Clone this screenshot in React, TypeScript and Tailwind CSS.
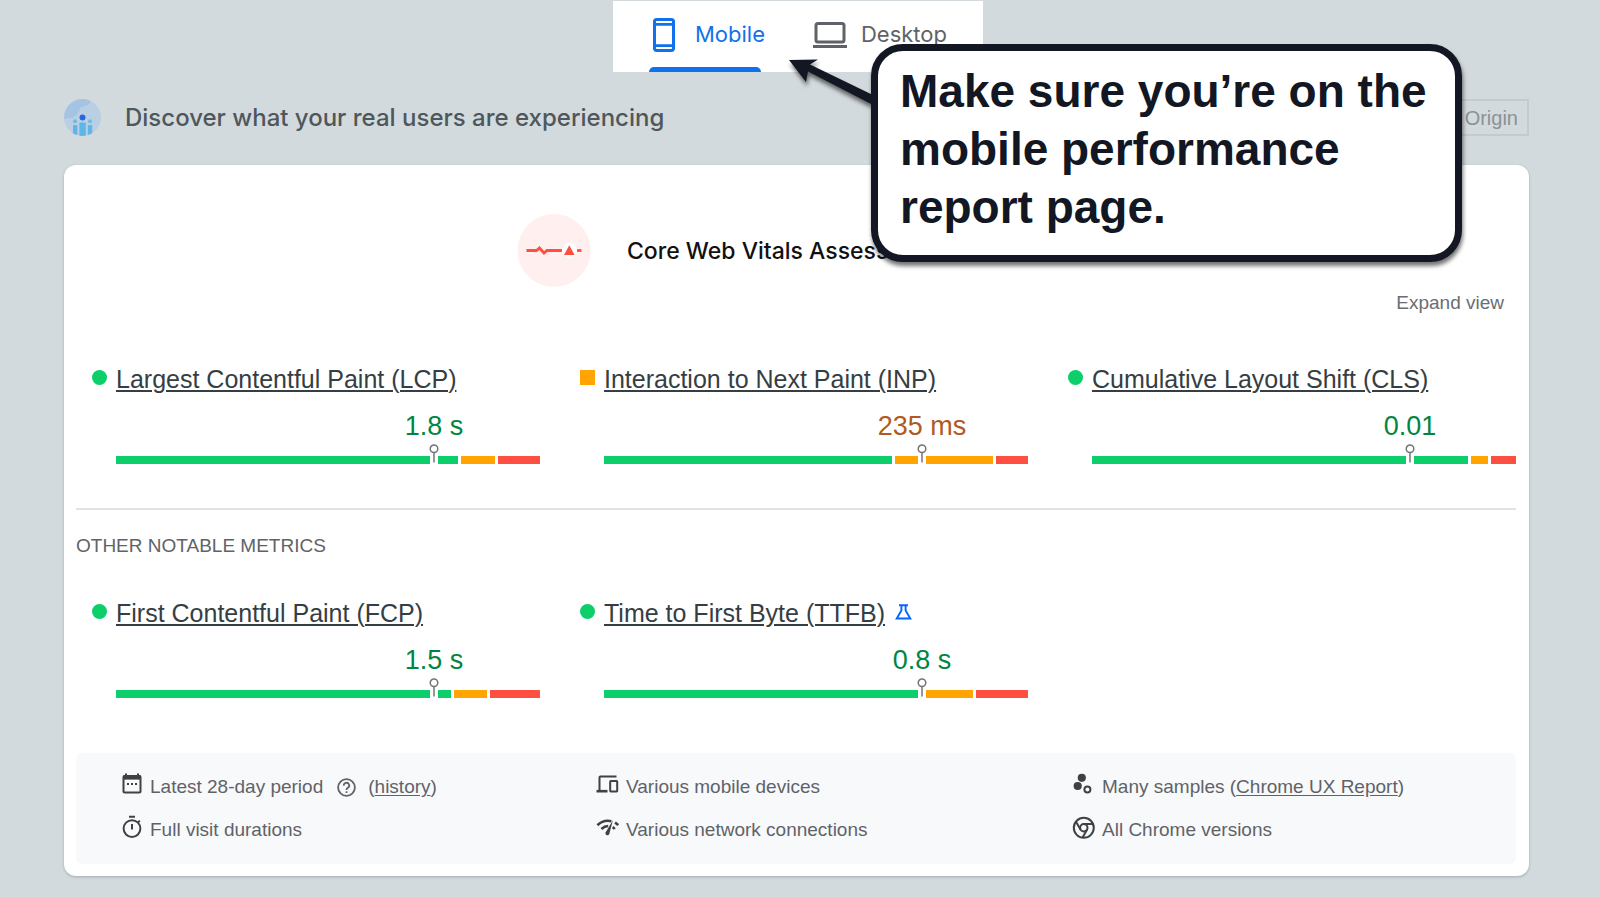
import { ReactNode } from 'react';
import clsx from 'clsx';

type Tone = 'good' | 'average' | 'poor';

interface Metric {
    name: string;
    value: string;
    status: Tone;
    // The marker sits between `before` and `after`
    before: [Tone, number][];
    after: [Tone, number][];
    experimental?: boolean;
}

const coreMetrics: Metric[] = [
    {
        name: 'Largest Contentful Paint (LCP)',
        value: '1.8 s',
        status: 'good',
        before: [['good', 314]],
        after: [['good', 20], ['average', 34], ['poor', 42]],
    },
    {
        name: 'Interaction to Next Paint (INP)',
        value: '235 ms',
        status: 'average',
        before: [['good', 288], ['average', 23]],
        after: [['average', 67], ['poor', 32]],
    },
    {
        name: 'Cumulative Layout Shift (CLS)',
        value: '0.01',
        status: 'good',
        before: [['good', 314]],
        after: [['good', 54], ['average', 17], ['poor', 25]],
    },
];

const otherMetrics: Metric[] = [
    {
        name: 'First Contentful Paint (FCP)',
        value: '1.5 s',
        status: 'good',
        before: [['good', 314]],
        after: [['good', 13], ['average', 33], ['poor', 50]],
    },
    {
        name: 'Time to First Byte (TTFB)',
        value: '0.8 s',
        status: 'good',
        before: [['good', 314]],
        after: [['average', 47], ['poor', 52]],
        experimental: true,
    },
];

const toneBg: Record<Tone, string> = {
    good: 'bg-[#0cce6b]',
    average: 'bg-[#ffa400]',
    poor: 'bg-[#ff4e42]',
};

const toneText: Record<Tone, string> = {
    good: 'text-[#018642]',
    average: 'text-[#b05a22]',
    poor: 'text-[#eb0f00]',
};

function Segments({ items }: { items: [Tone, number][] }) {
    return (
        <>
            {items.map(([tone, size], index) => (
                <div key={index} className={clsx('h-2 basis-0', toneBg[tone])} style={{ flexGrow: size }} />
            ))}
        </>
    );
}

function MetricCard({ metric }: { metric: Metric }) {
    return (
        <div className="flex gap-[9px]">
            <span
                className={clsx(
                    'mt-[7px] size-[15px] shrink-0',
                    toneBg[metric.status],
                    metric.status === 'good' && 'rounded-full',
                )}
            />
            <div className="min-w-0 flex-1">
                <div className="flex items-center gap-2.5">
                    <a href="#" className="text-[25px] leading-8 whitespace-nowrap text-[#353e43] underline decoration-2 underline-offset-2">
                        {metric.name}
                    </a>
                    {metric.experimental && <FlaskIcon />}
                </div>
                <div className={clsx('mt-[13px] ml-[75%] w-fit -translate-x-1/2 text-[27px] leading-9 whitespace-nowrap', toneText[metric.status])}>
                    {metric.value}
                </div>
                <div className="mt-3 flex">
                    <div className="flex w-[74%] gap-[3px]">
                        <Segments items={metric.before} />
                    </div>
                    <div className="relative w-2">
                        <svg className="absolute -top-3 -left-px" width="10" height="19" viewBox="0 0 10 19" fill="none" stroke="#757575" strokeWidth="1.5">
                            <circle cx="5" cy="4.8" r="3.8" fill="#fff" />
                            <path d="M5 8.6V18.5" />
                        </svg>
                    </div>
                    <div className="flex flex-1 gap-[3px]">
                        <Segments items={metric.after} />
                    </div>
                </div>
            </div>
        </div>
    );
}

function FlaskIcon() {
    return (
        <svg className="-mt-0.5" width="17" height="16" viewBox="0 0 17 16" fill="none" stroke="#0565ff" strokeWidth="1.9">
            <path d="M4 1.2H13M6.4 1.2V6.4L1.7 14.5H15.3L10.6 6.4V1.2" />
        </svg>
    );
}

function PhoneIcon() {
    return (
        <svg className="shrink-0" width="22" height="34" viewBox="0 0 22 34" fill="none" stroke="#1171ec" strokeWidth="3">
            <rect x="1.5" y="1.5" width="19" height="31" rx="2.2" />
            <path d="M2 6.4H20M2 27.6H20" strokeWidth="2.6" />
        </svg>
    );
}

function LaptopIcon() {
    return (
        <svg className="shrink-0" width="34" height="26" viewBox="0 0 34 26" fill="none" stroke="#5f6368">
            <rect x="3" y="1.5" width="28" height="18.6" rx="2" strokeWidth="3" />
            <path d="M0 24.4H34" strokeWidth="3" />
        </svg>
    );
}

function UsersIcon() {
    return (
        <svg width="37" height="37" viewBox="0 0 37 37">
            <defs>
                <clipPath id="globe">
                    <circle cx="18.5" cy="18.5" r="18.5" />
                </clipPath>
            </defs>
            <g clipPath="url(#globe)">
                <rect width="37" height="37" fill="#b9cfe4" />
                <path d="M0 0H26V4C24 7 20 6 19 8C17 9 16 7 16 10C16 13 13 13 13 16C9 17 9 20 5 19L0 20Z" fill="#a5c3e3" />
                <rect x="9" y="26" width="4.4" height="11" rx="1" fill="#5fb6e6" />
                <rect x="15.4" y="23.5" width="6.4" height="14" rx="1" fill="#5fb6e6" />
                <rect x="23.8" y="26" width="4.4" height="11" rx="1" fill="#5fb6e6" />
                <circle cx="11" cy="22.3" r="2" fill="#6dbbe6" />
                <circle cx="26" cy="22.3" r="2" fill="#6dbbe6" />
                <circle cx="18.5" cy="18.6" r="3" fill="#2a68e2" />
            </g>
        </svg>
    );
}

function VitalsIcon() {
    return (
        <svg width="74" height="74" viewBox="0 0 74 74">
            <circle cx="37" cy="36.5" r="36.5" fill="#fff0ef" />
            <path d="M9.5 36.5H19.5L22.5 34L27 39L30 36.5H45" fill="none" stroke="#ff4e42" strokeWidth="2.8" />
            <path d="M60 36.5H64.5" stroke="#ff4e42" strokeWidth="2.8" />
            <circle cx="52.3" cy="36.5" r="7.4" fill="#fff" />
            <path d="M52.3 31.3L57.6 41H47Z" fill="#ff4e42" />
        </svg>
    );
}

function CalendarIcon() {
    return (
        <svg width="24" height="24" viewBox="0 0 24 24" fill="none" stroke="#3f4144">
            <path d="M6 1.5V5M18 1.5V5" strokeWidth="2" />
            <rect x="3.5" y="4" width="17" height="16.6" rx="1" strokeWidth="2" />
            <path d="M3 5.6H21" strokeWidth="4" />
            <path d="M7 12H9M11 12H13M15 12H17" strokeWidth="1.8" />
        </svg>
    );
}

function TimerIcon() {
    return (
        <svg width="24" height="24" viewBox="0 0 24 24" fill="none" stroke="#3f4144" strokeWidth="2">
            <circle cx="12" cy="13.6" r="8.4" />
            <path d="M9 1.8H15M12 9V14.4M17.8 7.6L19.8 5.6" />
        </svg>
    );
}

function DevicesIcon() {
    return (
        <svg width="24" height="24" viewBox="0 0 24 24" fill="none" stroke="#3f4144" strokeWidth="2">
            <path d="M3.5 18.5V5.5Q3.5 4.6 4.4 4.6H20.5" />
            <path d="M0.5 19.2H11.5" strokeWidth="2.6" />
            <rect x="14.2" y="9" width="7" height="10.4" rx="0.6" />
        </svg>
    );
}

function NetworkIcon() {
    return (
        <svg width="24" height="24" viewBox="0 0 24 24" fill="none" stroke="#3f4144" strokeWidth="2.6">
            <path d="M1.4 10.2Q7.5 4.3 15.4 6.2M19 7.6Q20.8 8.7 22.2 10.2" />
            <path d="M5.4 14Q8.6 11 12.2 11M16.6 12.2Q17.8 12.9 18.8 14" />
            <path d="M16.9 5.2L13.4 18.4A2 2 0 1 1 10 16.8Z" fill="#3f4144" stroke="none" />
        </svg>
    );
}

function SamplesIcon() {
    return (
        <svg width="24" height="24" viewBox="0 0 24 24">
            <circle cx="9.8" cy="5.8" r="4.1" fill="#3f4144" />
            <circle cx="5.7" cy="14" r="4.1" fill="#3f4144" />
            <circle cx="15.4" cy="17.6" r="3" fill="none" stroke="#3f4144" strokeWidth="2" />
        </svg>
    );
}

function ChromeIcon() {
    return (
        <svg width="24" height="24" viewBox="0 0 24 24" fill="none" stroke="#3f4144" strokeWidth="2">
            <circle cx="11.8" cy="12.8" r="10" />
            <circle cx="11.8" cy="12.8" r="3.7" />
            <path d="M11.8 9.1H20.8M8.6 14.7L4 6.8M15 14.7L10.6 22.6" />
        </svg>
    );
}

function HelpIcon() {
    return (
        <svg className="mr-3 ml-3.5" width="19" height="19" viewBox="0 0 19 19" fill="none" stroke="#5f6368" strokeWidth="1.8">
            <circle cx="9.5" cy="9.5" r="8.4" />
            <path d="M6.8 7.6A2.7 2.7 0 1 1 10.9 9.8Q9.5 10.6 9.5 12" />
            <path d="M9.5 13.3V15" />
        </svg>
    );
}

function Fact({ icon, children }: { icon: ReactNode; children: ReactNode }) {
    return (
        <li className="flex h-7 items-center gap-1.5 whitespace-nowrap">
            <span className="-mt-1.5 shrink-0">{icon}</span>
            <span className="flex items-center">{children}</span>
        </li>
    );
}

function Callout() {
    return (
        <div className="absolute top-11 left-[871px] drop-shadow-[1px_4px_2px_rgba(0,0,0,0.55)]">
            <svg className="absolute top-3.5 -left-[84px]" width="90" height="50" viewBox="0 0 90 50" fill="#121723">
                <path d="M2 2L31 1.5L23 6.5L88 38V48L21 13.5L19 24Z" />
            </svg>
            <p className="relative w-[591px] rounded-[32px] border-[7px] border-[#121723] bg-white pt-[11px] pr-4 pb-[19px] pl-[22px] text-[46px] leading-[58px] font-bold text-[#121723]">
                Make sure you’re on the mobile performance report page.
            </p>
        </div>
    );
}

export default function App() {
    return (
        <div className="relative min-h-screen overflow-hidden bg-[#d3dadd] pt-px font-['Liberation_Sans',Arial,sans-serif]">
            {/* Device tabs */}
            <div className="flex justify-center pr-1">
                <nav className="flex h-[71px] gap-[52px] bg-white px-9 font-['Inter',sans-serif] text-[22px]">
                    <button className="relative flex w-28 items-center gap-5 pb-1 pl-1 text-[#1171ec]">
                        <PhoneIcon />
                        Mobile
                        <span className="absolute inset-x-0 bottom-0 h-[5px] rounded-t-md bg-[#1171ec]" />
                    </button>
                    <button className="flex items-center gap-3.5 pb-1 text-[#5f6368]">
                        <LaptopIcon />
                        Desktop
                    </button>
                </nav>
            </div>

            <div className="pr-[71px] pl-16">
                <header className="mt-[27px] mb-[29px] flex items-center justify-between">
                    <div className="flex items-center gap-6">
                        <UsersIcon />
                        <h2 className="font-['Inter',sans-serif] text-2xl font-medium text-[#4e575b]">
                            Discover what your real users are experiencing
                        </h2>
                    </div>
                    <button className="h-[37px] border-2 border-[#c3cbcf] px-[9px] text-xl text-[#8a9296]">Origin</button>
                </header>

                <main className="rounded-xl bg-white pt-[49px] pr-[13px] pb-3 pl-3 shadow-[0_1px_3px_#9fabb2]">
                    <div className="flex items-center gap-9 pl-[441px]">
                        <VitalsIcon />
                        <h3 className="font-['Inter',sans-serif] text-[23px] font-medium text-[#111]">Core Web Vitals Assessment</h3>
                    </div>
                    <div className="flex justify-end pt-px pr-3">
                        <button className="text-[19px] leading-7 text-[#6a6e73]">Expand view</button>
                    </div>

                    <div className="mt-[46px] grid grid-cols-3 gap-10 pl-4">
                        {coreMetrics.map((metric) => (
                            <MetricCard key={metric.name} metric={metric} />
                        ))}
                    </div>

                    <hr className="mt-11 border-t-2 border-[#e1e2e6]" />
                    <h4 className="mt-[22px] text-[19px] leading-7 text-[#5f6368]">OTHER NOTABLE METRICS</h4>

                    <div className="mt-[37px] grid grid-cols-3 gap-10 pl-4">
                        {otherMetrics.map((metric) => (
                            <MetricCard key={metric.name} metric={metric} />
                        ))}
                    </div>

                    {/* Report facts */}
                    <ul className="mt-[55px] grid grid-cols-3 gap-x-[76px] gap-y-[15px] rounded-md bg-[#f8f9fb] px-11 pt-5 pb-5 text-[19px] text-[#5f6368]">
                        <Fact icon={<CalendarIcon />}>
                            Latest 28-day period
                            <HelpIcon />
                            (<a href="#" className="underline underline-offset-2">history</a>)
                        </Fact>
                        <Fact icon={<DevicesIcon />}>Various mobile devices</Fact>
                        <Fact icon={<SamplesIcon />}>
                            <span>Many samples (<a href="#" className="underline underline-offset-2">Chrome UX Report</a>)</span>
                        </Fact>
                        <Fact icon={<TimerIcon />}>Full visit durations</Fact>
                        <Fact icon={<NetworkIcon />}>Various network connections</Fact>
                        <Fact icon={<ChromeIcon />}>All Chrome versions</Fact>
                    </ul>
                </main>
            </div>

            <Callout />
        </div>
    );
}
